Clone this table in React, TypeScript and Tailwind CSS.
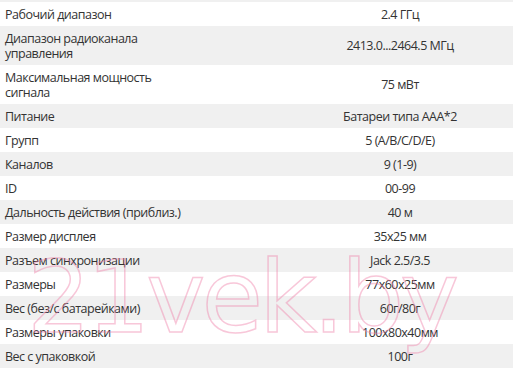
import React from "react";

const specs: [string, string][] = [
	["Рабочий диапазон", "2.4 ГГц"],
	["Диапазон радиоканала управления", "2413.0...2464.5 МГц"],
	["Максимальная мощность сигнала", "75 мВт"],
	["Питание", "Батареи типа AAA*2"],
	["Групп", "5 (A/B/C/D/E)"],
	["Каналов", "9 (1-9)"],
	["ID", "00-99"],
	["Дальность действия (приблиз.)", "40 м"],
	["Размер дисплея", "35x25 мм"],
	["Разъем синхронизации", "Jack 2.5/3.5"],
	["Размеры", "77x60x25мм"],
	["Вес (без/с батарейками)", "60г/80г"],
	["Размеры упаковки", "100x80x40мм"],
	["Вес с упаковкой", "100г"],
];

export default function App() {
	return (
		<div className="relative w-[513px] h-[368px] overflow-hidden bg-white text-[12.5px] leading-[15px] tracking-[-0.5px] text-[#333] font-['Open_Sans',sans-serif]">
			<div className="h-[2px] bg-[#f0f0f0]" />
			{specs.map(([label, value], i) => (
				<div
					key={label}
					className={`grid grid-cols-[287px_1fr] ${i % 2 === 1 ? "bg-[#f0f0f0]" : "bg-white"}`}>
					<div className="py-[4.5px] pl-[5px]">
						<div className="max-w-[187px]">{label}</div>
					</div>
					<div className="flex items-center justify-center py-[4.5px]">
						{value}
					</div>
				</div>
			))}

			{/* watermark */}
			<div className="pointer-events-none absolute left-[27px] top-[248px] whitespace-nowrap font-['DejaVu_Sans',sans-serif] text-[100px] leading-[100px] tracking-[-4px] text-transparent [-webkit-text-stroke:1.5px_rgba(240,130,170,0.45)]">
				21vek.by
			</div>
		</div>
	);
}
